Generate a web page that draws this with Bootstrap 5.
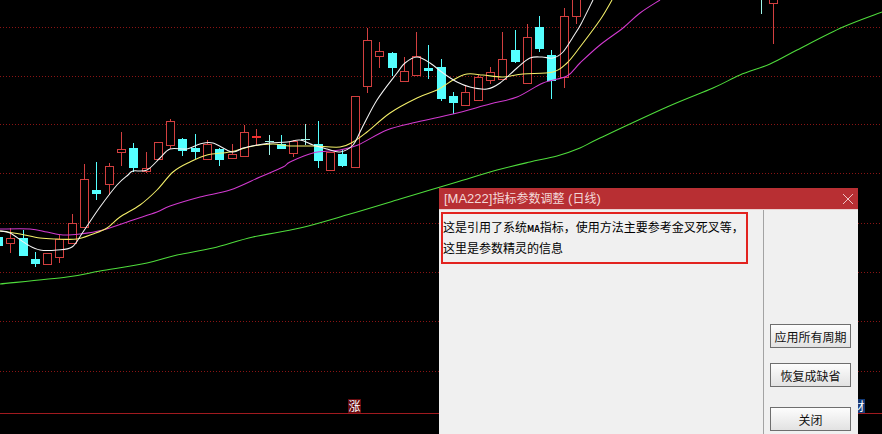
<!DOCTYPE html>
<html lang="zh-CN">
<head>
<meta charset="utf-8">
<title>MA222</title>
<link href="https://cdn.jsdelivr.net/npm/bootstrap@5.3.0/dist/css/bootstrap.min.css" rel="stylesheet">
<style>
html,body{height:100%;margin:0;background:#000;overflow:hidden}
.stage{width:882px;height:434px;background:#000;font-family:"Liberation Sans","Noto Sans CJK SC",sans-serif}
.plot{display:block;width:882px;height:434px}
.tag-zhang,.tag-cai{left:348px;top:399px;width:13px;height:14px;background:#640a0e;color:#fff;font-size:12px;line-height:14px;text-align:center;font-family:"Noto Sans CJK SC",sans-serif}
.tag-cai{left:852px;top:399px;background:#123a78}
.dlg{left:439px;top:188px;width:419px;height:246px;background:#f0f0f0;color:#000}
.dlg-head{height:22px;padding-left:5px;background:#b82f33;color:#f3d9d9;font-size:13px;line-height:22px;border-bottom:1px solid #e9d0d0}
.zh12{font-size:12px}
.dlg-x{width:12px;height:12px;margin-right:4px}
.dlg-main{width:325px;padding:2px 0 0 2px;border-right:1px solid #a3a3a3}
.note{width:307px;height:52px;border:2px solid #e2231f;padding:3px 0 0 0;font-size:12px;line-height:20px;font-family:"Noto Sans CJK SC",sans-serif;white-space:nowrap}
.ma-narrow{font-size:8.5px;font-weight:700}
.side{width:94px;padding:0 7px 3px 6px}
.side .btn{width:81px;height:24px;padding:0;border:1px solid #6e6e6e;border-radius:0;background:linear-gradient(#fdfdfd,#e2e2e2);color:#111;font-size:12px;line-height:21px;font-family:"Noto Sans CJK SC",sans-serif;white-space:nowrap}
.gap-a{margin-bottom:15px}
.gap-b{margin-bottom:20px}
</style>
</head>
<body>
<div class="stage position-relative overflow-hidden">
<svg class="plot" id="plot" viewBox="0 0 882 434" xmlns="http://www.w3.org/2000/svg"></svg>
<div class="tag-zhang position-absolute">涨</div>
<div class="tag-cai position-absolute">财</div>
<div class="dlg position-absolute d-flex flex-column">
  <div class="dlg-head d-flex align-items-center justify-content-between">
    <span>[MA222]<span class="zh12">指标参数调整</span> (<span class="zh12">日线</span>)</span>
    <svg class="dlg-x" viewBox="0 0 12 12"><path d="M1 1L11 11M11 1L1 11" stroke="#eec4c4" stroke-width="1" fill="none"/></svg>
  </div>
  <div class="d-flex flex-grow-1">
    <div class="dlg-main">
      <div class="note">这是引用了系统<span class="ma-narrow">MA</span>指标，使用方法主要参考金叉死叉等，<br>这里是参数精灵的信息</div>
    </div>
    <div class="side d-flex flex-column justify-content-end">
      <button type="button" class="btn gap-a">应用所有周期</button>
      <button type="button" class="btn gap-b">恢复成缺省</button>
      <button type="button" class="btn">关闭</button>
    </div>
  </div>
</div>
</div>
<script src="https://cdn.jsdelivr.net/npm/bootstrap@5.3.0/dist/js/bootstrap.bundle.min.js"></script>
<script>
var R='#d23f3f',C='#55ffff';
// left, wickTop, wickBottom, bodyTop, bodyBottom, kind (r hollow red, c cyan, f red flat, x cross)
var K=[[-6,228,240,237,246,'c'],[6,228,253,238,243,'r'],[19,230,256,238,256,'c'],[31,252,267,259,264,'c'],[43,253,265,253,264,'r'],[55,235,263,239,257,'r'],[68,214,243,223,243,'r'],[80,164,227,179,227,'r'],[92,162,200,190,194,'c'],[105,163,195,166,184,'r'],[117,132,166,149,152,'r'],[129,143,172,148,168,'c'],[142,152,173,168,171,'r'],[154,142,159,142,159,'r'],[166,119,149,121,145,'r'],[178,138,156,139,151,'c'],[191,134,159,148,152,'c'],[203,140,159,144,159,'r'],[215,148,166,149,160,'c'],[228,144,158,154,158,'r'],[240,125,157,132,156,'r'],[252,129,145,136,138,'f'],[265,135,155,141,142,'x'],[277,135,149,144,149,'c'],[289,140,157,141,153,'r'],[301,124,145,139,140,'x'],[314,121,168,144,161,'c'],[326,152,171,152,170,'r'],[338,150,167,154,166,'c'],[351,96,167,96,167,'r'],[363,28,93,40,86,'r'],[375,42,68,51,56,'r'],[388,52,76,53,68,'c'],[400,57,81,71,81,'r'],[412,32,75,56,75,'r'],[424,45,79,68,71,'c'],[437,59,101,67,99,'c'],[449,92,114,96,103,'c'],[461,85,105,92,105,'r'],[474,75,100,77,100,'r'],[486,67,84,72,80,'r'],[498,32,80,59,79,'r'],[511,30,63,50,62,'c'],[523,24,83,37,83,'r'],[535,16,52,27,49,'c'],[547,50,99,55,81,'c'],[560,8,88,16,77,'r'],[572,0,24,-3,16,'r'],[769,-3,44,-3,3,'r']];
var W=[[0,231],[10,233],[28,245],[40,250],[57,250],[72,247],[83,232],[100,207],[117,185],[128,175],[133,171],[147,170],[160,158],[170,149],[187,149],[200,144],[213,143],[232,152],[243,148],[257,145],[270,143],[287,142],[300,140],[313,145],[327,149],[340,152],[353,145],[362,128],[377,100],[397,73],[405,63],[417,57],[430,63],[443,73],[457,82],[470,87],[487,89],[500,83],[517,68],[530,58],[542,57],[553,58],[563,52],[573,37],[581,24],[593,0]];
var Y=[[0,231],[20,234],[40,238],[57,239],[77,239],[93,234],[107,228],[120,217],[140,205],[157,190],[173,172],[190,162],[207,155],[230,152],[253,146],[273,144],[290,146],[313,146],[340,147],[353,142],[367,132],[390,113],[417,98],[437,90],[453,80],[467,74],[483,75],[503,77],[523,74],[553,72],[567,63],[580,47],[600,20],[612,0]];
var M=[[0,229],[30,229],[47,232],[63,235],[80,234],[103,230],[133,220],[157,212],[170,206],[200,197],[230,190],[260,177],[283,167],[290,162],[313,153],[340,150],[358,145],[387,130],[417,122],[453,114],[490,104],[517,97],[543,83],[567,76],[580,63],[600,45],[623,28],[640,13],[660,0]];
var G=[[0,284],[67,277],[100,271],[147,263],[177,255],[213,248],[253,237],[300,228],[350,214],[400,199],[430,190],[457,182],[497,170],[530,162],[557,156],[580,148],[600,138],[667,107],[713,88],[740,75],[770,64],[797,50],[843,27],[882,12]];
function smooth(p){var d='M'+p[0][0]+' '+p[0][1];for(var i=0;i<p.length-1;i++){var a=p[Math.max(i-1,0)],b=p[i],c=p[i+1],e=p[Math.min(i+2,p.length-1)];d+='C'+(b[0]+(c[0]-a[0])/6).toFixed(1)+' '+(b[1]+(c[1]-a[1])/6).toFixed(1)+' '+(c[0]-(e[0]-b[0])/6).toFixed(1)+' '+(c[1]-(e[1]-b[1])/6).toFixed(1)+' '+c[0]+' '+c[1];}return d;}
var s='';
[27,76,124,173,223,272,321,371].forEach(function(y){s+='<line x1="0" x2="882" y1="'+(y+.5)+'" y2="'+(y+.5)+'" stroke="#8a1414" stroke-dasharray="1 2"/>';});
s+='<line x1="0" x2="882" y1="413.5" y2="413.5" stroke="#a01a1f"/>';
K.forEach(function(k){var x=k[0],t=k[5],col=(t=='c')?C:(t=='x'?'#9ff5e8':R),cx=x+4.5;
 s+='<line x1="'+cx+'" x2="'+cx+'" y1="'+k[1]+'" y2="'+k[2]+'" stroke="'+col+'"/>';
 if(t=='r'){s+='<rect x="'+(x+.5)+'" y="'+(k[3]+.5)+'" width="8" height="'+(k[4]-k[3])+'" fill="#000" stroke="'+R+'"/>';}
 else if(t=='f'){s+='<rect x="'+x+'" y="'+k[3]+'" width="9" height="'+(k[4]-k[3])+'" fill="#f23030"/>';}
 else if(t=='x'){s+='<rect x="'+x+'" y="'+k[3]+'" width="9" height="1" fill="'+col+'"/>';}
 else{s+='<rect x="'+x+'" y="'+k[3]+'" width="9" height="'+(k[4]-k[3])+'" fill="'+C+'"/>';}
});
s+='<line x1="761.5" x2="761.5" y1="0" y2="14" stroke="#9ff5e8"/>';
[[G,'#4fdc3c'],[M,'#d23ad0'],[Y,'#f5f06a'],[W,'#f4f4f4']].forEach(function(l){s+='<path d="'+smooth(l[0])+'" fill="none" stroke="'+l[1]+'" stroke-width="1.05"/>';});
document.getElementById('plot').innerHTML=s;
</script>
</body>
</html>
